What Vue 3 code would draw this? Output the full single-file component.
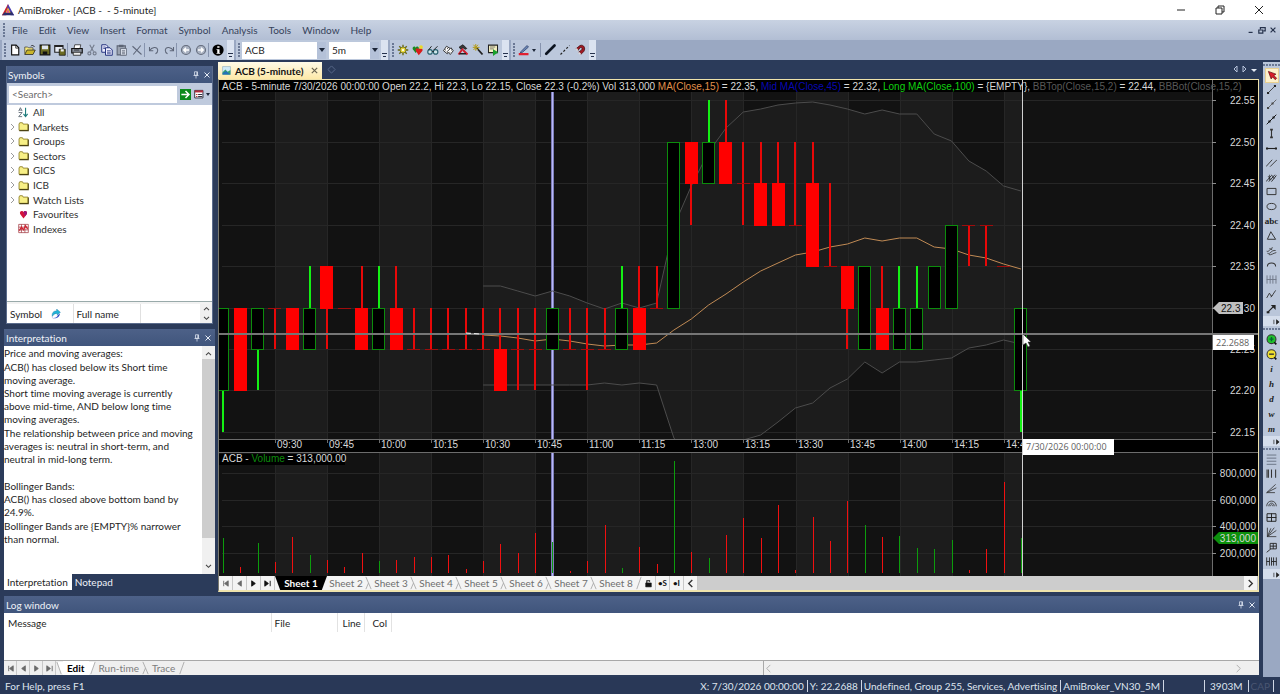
<script setup>
const icons = {
  logo: '<path d="M8 1 1 14h5l3-8z" fill="#c8202c"/><path d="M8 1l7 13h-4L7 6z" fill="#4a3fb0"/><path d="M1 14h14l-3-4H5z" fill="#2c2f6b"/><path d="M8 5l3 6H5z" fill="#f0b428"/><path d="M8 7l1.500 4H6z" fill="#d84a9a"/>',
  file: '<path d="M3.500 1.500h6l3.500 3.500v9.500h-9.500z" fill="#fff" stroke="#111" stroke-width="1.500"/><path d="M9 1.500v4h4" fill="none" stroke="#111"/>',
  open: '<path d="M1 13V4h4l1 1h6v3" fill="#f5e87a" stroke="#444" /><path d="M1 14l3-6h11l-3 6z" fill="#c9b52a" stroke="#222"/><path d="M9 3c2-2 4-1 5 1" fill="none" stroke="#111"/>',
  save: '<path d="M1.500 1.500h13v13h-13z" fill="#6b6b22" stroke="#111" stroke-width="1.500"/><path d="M4 2h8v5H4z" fill="#dfe6ee"/><path d="M5 10h6v4H5z" fill="#111"/>',
  saveall: '<path d="M1 2h11v9H1z" fill="#e8edf5" stroke="#222" stroke-width="1.500"/><path d="M1 2h11v2H1z" fill="#222"/><path d="M7 7h8v8H7z" fill="#6b6b22" stroke="#111"/><path d="M9 7h4v3H9z" fill="#eee"/>',
  print: '<path d="M4 6l1-5h8l-1 5" fill="#fff" stroke="#222"/><path d="M1 6h14v6H1z" fill="#8b919c" stroke="#111" stroke-width="1.500"/><path d="M3 11h10v4H3z" fill="#eee" stroke="#111"/><path d="M4 8h7" stroke="#111"/>',
  cut: '<path d="M5 1l5 9M11 1L6 10" stroke="#747c8c" stroke-width="1.500"/><circle cx="4.500" cy="12.500" r="2" fill="none" stroke="#747c8c" stroke-width="1.500"/><circle cx="11.500" cy="12.500" r="2" fill="none" stroke="#747c8c" stroke-width="1.500"/>',
  copy: '<path d="M1 1h6l2 2v8H1z" fill="#eef" stroke="#22307c" stroke-width="1.300"/><path d="M6 5h6l3 3v7H6z" fill="#eef" stroke="#22307c" stroke-width="1.300"/><path d="M3 4h3M3 6h3M8 9h5M8 11h5M8 13h5" stroke="#22307c"/>',
  paste: '<path d="M1.500 2.500h11v12h-11z" fill="#9aa2b0" stroke="#5c6474" stroke-width="1.400"/><path d="M4 1h6v3H4z" fill="#5c6474"/><path d="M6 6h8v9H6z" fill="#d5dbe6" stroke="#5c6474"/><path d="M8 9h4M8 11h4M8 13h4" stroke="#5c6474"/>',
  del: '<path d="M2 3l12 11M13 2L3 14" stroke="#5e6678" stroke-width="1.400"/>',
  undo: '<path d="M2 4v5h5" fill="none" stroke="#5e6678" stroke-width="1.400"/><path d="M2 9c3-5 10-6 11-1 0 2-1 4-3 5" fill="none" stroke="#5e6678" stroke-width="1.400"/>',
  redo: '<path d="M14 4v5H9" fill="none" stroke="#5e6678" stroke-width="1.400"/><path d="M14 9C11 4 4 3 3 8c0 2 1 4 3 5" fill="none" stroke="#5e6678" stroke-width="1.400"/>',
  back: '<circle cx="8" cy="8" r="6" fill="#a9b2c2" stroke="#656d7d" stroke-width="1.500"/><path d="M12 8H5M8 5L5 8l3 3" fill="none" stroke="#fff" stroke-width="1.800"/>',
  fwd: '<circle cx="8" cy="8" r="6" fill="#a9b2c2" stroke="#656d7d" stroke-width="1.500"/><path d="M4 8h7M8 5l3 3-3 3" fill="none" stroke="#fff" stroke-width="1.800"/>',
  info: '<circle cx="8" cy="8" r="7.500" fill="#000"/><path d="M7 3h3v2H7zM6 7h4v5h1v1H6v-1h1V8H6z" fill="#fff"/>',
  gear: '<path d="M8 1v14M1 8h14M3 3l10 10M13 3L3 13" stroke="#6a6a18" stroke-width="1.800"/><circle cx="8" cy="8" r="4" fill="#e6d63a" stroke="#6a6a18"/><circle cx="8" cy="8" r="1.500" fill="#fff"/>',
  hearts: '<path d="M5 12L1 7c-1-4 3-5 4-2 1-3 5-2 4 2z" fill="#188a20"/><path d="M9 15L5 9c-1-4 3-4 4-2 1-2 6-2 5 2z" fill="#d81c1c"/><circle cx="12" cy="4" r="2.500" fill="#e9d92c"/>',
  glasses: '<circle cx="4" cy="10.500" r="3" fill="#cfe6ea" stroke="#28606e" stroke-width="1.500"/><circle cx="11.500" cy="10.500" r="3" fill="#cfe6ea" stroke="#28606e" stroke-width="1.500"/><path d="M2 8l4-5M9 8l5-5M7 10h2" stroke="#222" stroke-width="1.300"/>',
  dice: '<path d="M2 9l4-6 5 3-4 7z" fill="#fff" stroke="#222" stroke-width="1.200"/><path d="M7 10l5-5 3 4-4 5z" fill="#fff" stroke="#222" stroke-width="1.200"/><path d="M4 8h1M7 6h1M10 11h1M12 8h1" stroke="#222" stroke-width="1.500"/>',
  hammer: '<path d="M3 4l5-3 5 5-2 1-3-2-3 2z" fill="#3a3a3a" stroke="#111"/><path d="M8 6L2 14" stroke="#d01c2c" stroke-width="2.500"/><path d="M8 8l6 6" stroke="#d01c2c" stroke-width="2.500"/><path d="M3 13h9" stroke="#222" stroke-width="2"/>',
  wand: '<path d="M6 5l8 9" stroke="#222" stroke-width="2.500"/><path d="M5 0v9M1 4.500h9M2 1l6 7M8 1L2 8" stroke="#b59c1a" stroke-width="1.300"/>',
  exec: '<path d="M2 1.500h12v10H2z" fill="#f5f0c0" stroke="#222" stroke-width="1.400"/><path d="M4 4h7M4 6.500h5" stroke="#555"/><path d="M8 7l7 4-7 5z" fill="#1aa02c"/>',
  pen: '<path d="M4 10L12 2l2 2-8 7-3 1z" fill="#6c87b8" stroke="#2c3f66"/><path d="M1 13.500h13" stroke="#e02030" stroke-width="3"/>',
  thick: '<path d="M3 13L14 2" stroke="#0c1420" stroke-width="3.500" stroke-linecap="round"/>',
  dashed: '<path d="M2 14L14 2" stroke="#222" stroke-width="1.600" stroke-dasharray="3 2.500"/>',
  magnet: '<path d="M3 6L8 2c5-2 8 4 5 8l-4 4-3-3 4-3c2-2 0-4-2-3L5 9z" fill="#a01822" stroke="#40080c"/><path d="M3 6l2 3M6 11l3 3" stroke="#ddd" stroke-width="2"/>',
  // drawing tools
  pointer: '<path d="M2 2l4 11 2-3 4 4 2-2-4-4 3-2z" fill="#d81c2c" stroke="#5c0c12"/>',
  seg: '<path d="M3 13L13 3" stroke="#333" stroke-width="1.200"/><path d="M1.500 11.500h3v3h-3zM11.500 1.500h3v3h-3z" fill="#222"/>',
  ray: '<path d="M3 13L15 1" stroke="#555" stroke-width="1.200"/><path d="M1.500 11.500h3v3h-3zM8 5h3v3H8z" fill="#444"/>',
  line: '<path d="M1 15L15 1" stroke="#111" stroke-width="1.400"/><path d="M3.500 9.500h3v3h-3zM9.500 3.500h3v3h-3z" fill="#111"/>',
  vert: '<path d="M8 2v12" stroke="#333" stroke-width="1.600"/><path d="M6 1h4v2.500H6zM6 12.500h4V15H6z" fill="#333"/>',
  horiz: '<path d="M1 8h14" stroke="#222" stroke-width="1.600"/><path d="M0 6.500h3v3H0zM13 6.500h3v3h-3z" fill="#222"/>',
  para: '<path d="M0 14L9 4M6 14L16 4" stroke="#333" stroke-width="1.300"/>',
  pitch: '<path d="M0 14L8 5M4 14l9-10M8 14l7-9" stroke="#222" stroke-width="1.300"/><path d="M3 6l4 5M8 4l4 6M5 4v8" stroke="#222"/>',
  rect: '<path d="M1.500 3.500h13v9h-13z" fill="none" stroke="#333" stroke-width="1.400"/>',
  oval: '<ellipse cx="8" cy="8" rx="6.500" ry="4.500" fill="none" stroke="#333" stroke-width="1.400"/>',
  tri: '<path d="M7 2.500l7 11H2z" fill="none" stroke="#333" stroke-width="1.400"/>',
  cycles: '<path d="M1 9c4 2 5-5 9-5M2 12c5 2 5-5 12-4M4 14c4 1 6-2 11-3M5 5l4 2" fill="none" stroke="#333" stroke-width="1.200"/>',
  arc: '<path d="M2 11c0-7 12-7 12 0" fill="none" stroke="#333" stroke-width="1.500"/>',
  vlines: '<path d="M1.500 2v12M6 2v12M10 2v12M14.500 2v12M1 8h14" stroke="#6c7484" stroke-width="1.300"/>',
  zig: '<path d="M1 13L5 6l3 5 6-9M7 12l2-3" fill="none" stroke="#333" stroke-width="1.300"/>',
  arrow: '<path d="M3 13L12 4" stroke="#222" stroke-width="1.600"/><path d="M7 3h7v7z" fill="#222"/><path d="M1 12h4v3H1z" fill="#222"/>',
  zin: '<circle cx="8" cy="7.500" r="6.500" fill="#20c02c" stroke="#333" stroke-width="1.500"/><path d="M5 7.500h6M8 4.500v6" stroke="#063" stroke-width="2"/><path d="M12 12l3 3" stroke="#111" stroke-width="2.500"/>',
  zout: '<circle cx="8" cy="7.500" r="6.500" fill="#f0e030" stroke="#333" stroke-width="1.500"/><path d="M4.500 7.500h7" stroke="#333" stroke-width="2"/><path d="M12 12l3 3" stroke="#111" stroke-width="2.500"/>',
  hlines: '<path d="M1 1.500h14M1 6h14M1 10.500h14M1 15h14" stroke="#4c5464"/>',
  vbars: '<path d="M1.500 2v12M3.500 2v12M8 2v12M14 2v12" stroke="#333" stroke-width="1.500"/>',
  fan: '<path d="M1 14L14 2M1 14L15 7M1 14h12" stroke="#333" stroke-width="1.200"/>',
  arcs: '<path d="M1 12c0-10 14-10 14 0M4 12c0-6 8-6 8 0M6 12c0-3 4-3 4 0" fill="none" stroke="#333" stroke-width="1.200"/>',
  grid: '<path d="M1.500 2.500h13v11h-13zM8 2v12M1 8h14" fill="none" stroke="#222" stroke-width="1.400"/>',
  gann: '<path d="M2 1v13h13M2 14L12 1M2 14L15 5M2 14L7 2" fill="none" stroke="#333" stroke-width="1.200"/>',
  ext: '<path d="M1 15l6-5M6 2h9v8H6zM6 6h9M10.500 2v8" fill="none" stroke="#222" stroke-width="1.300"/>',
  time: '<path d="M1 2v12M5 2v12M1 8h4M8 2v12M11 2v12M15 2v12M8 8h7" stroke="#222" stroke-width="1.300"/>',
  // tree and panels
  sort: '<path d="M1 6l2.500-5L6 6M2 4.500h3M1 8h5l-5 6h5" fill="none" stroke="#53606c" stroke-width="1.200"/><path d="M11 1v12M8 10l3 4 3-4" fill="none" stroke="#1e7c7c" stroke-width="1.600"/>',
  folder: '<path d="M1.500 4.500l1-2h4l1 2h7v9h-13z" fill="#f7ef86" stroke="#8b7b22" stroke-width="1.200"/><path d="M2 14h13V5" fill="none" stroke="#4c4312" stroke-width="1.500"/>',
  heart: '<path d="M8 15L2 7C0 1 7 0 8 4c1-4 8-3 6 3z" fill="#d3143c"/><path d="M8 4c1-4 8-3 6 3l-3 4z" fill="#9c1478"/>',
  indexes: '<path d="M1 2h14v12H1zM1 6h14M1 10h14M5 2v12M10 2v12" fill="#fff" stroke="#9c2c34"/><path d="M2 11l3-5 3 4 3-6 3 5" fill="none" stroke="#d02030" stroke-width="1.800"/>',
  go: '<path d="M0 0h16v16H0z" fill="#0c8a1c"/><path d="M2 8h10M8 3l5 5-5 5" fill="none" stroke="#fff" stroke-width="2.200"/>',
  list: '<path d="M1 2h12v11H1z" fill="#fff" stroke="#334" stroke-width="1.400"/><path d="M1 2h12v3H1z" fill="#b02c3c"/><path d="M3 8h2M3 11h2" stroke="#c02c2c" stroke-width="1.500"/><path d="M6 8h6M6 11h6" stroke="#334" stroke-width="1.500"/>',
  refresh: '<path d="M9 0l6 5-5 5V7C7 7 4 8 2 12 1 6 4 3 9 3z" fill="#20b4d8" stroke="#186c9c" stroke-width=".6"/><path d="M1 14c6 1 9-1 10-4l3-3c1 5-5 10-13 7z" fill="#3048c8"/>',
  picture: '<path d="M1 1h14v14H1z" fill="#cfeaf8" stroke="#8ab"/><path d="M1 11l5-5 4 4 5-3v8H1z" fill="#36a06c"/><path d="M1 13l6-4 8 6H1z" fill="#2470b8"/>',
  pin: '<path d="M5 1.500h6v7H5zM3 9h10M8 9v6" fill="none" stroke="#dde4f0" stroke-width="1.500"/><path d="M9 2h2v6H9z" fill="#dde4f0"/>',
  close: '<path d="M3 3l10 10M13 3L3 13" fill="none" stroke="#e4eaf4" stroke-width="2"/>',
  lock: '<path d="M3 7h10v7H3z" fill="#111"/><path d="M5 7V3h5v2" fill="none" stroke="#111" stroke-width="1.800"/>'
}
const menus = ['File', 'Edit', 'View', 'Insert', 'Format', 'Symbol', 'Analysis', 'Tools', 'Window', 'Help']
const mainTools = ['file', 'open', 'save', 'saveall', '|', 'print', 'cut', 'copy', 'paste', 'del', '|', 'undo', 'redo', '|', 'back', 'fwd', '|', 'info']
const analysisTools = ['gear', 'hearts', 'glasses', 'dice', 'hammer', 'wand', 'exec']
const tree = [['All', 'sort', false], ['Markets', 'folder', true], ['Groups', 'folder', true], ['Sectors', 'folder', true], ['GICS', 'folder', true], ['ICB', 'folder', true], ['Watch Lists', 'folder', true], ['Favourites', 'heart', false], ['Indexes', 'indexes', false]]
const notes = ['Price and moving averages:', 'ACB() has closed below its Short time\nmoving average.', 'Short time moving average is currently\nabove mid-time, AND below long time\nmoving averages.', 'The relationship between price and moving\naverages is: neutral in short-term, and\nneutral in mid-long term.', '\u00a0', 'Bollinger Bands:', 'ACB() has closed above bottom band by\n24.9%.', 'Bollinger Bands are {EMPTY}% narrower\nthan normal.']
const sheets = [2, 3, 4, 5, 6, 7, 8]
const rail = [
  { cls: 'draw', items: ['pointer', 'seg', 'ray', 'line', 'vert', 'horiz', 'para', 'pitch', 'rect', 'oval', 'abc', 'tri', 'cycles', 'arc', 'vlines', 'zig', 'arrow'] },
  { cls: 'zoom', items: ['zin', 'zout', 'i', 'h', 'd', 'w', 'm'] },
  { cls: 'fibo', items: ['hlines', 'vbars', 'fan', 'arcs', 'grid', 'gann', 'ext', 'time'] }
]

// Price levels: 0 is 22.55 and each step is 0.05 lower.
const bx = i => 222.8 + 17.35 * i
const ly = n => Math.round(100.3 + 41.45 * n)
// Colour, then levels of body top, body bottom, one wick end and the other.
const bars = [
  'g5758', 'r5757', 'g5657', 'r5556', 'r5656', 'g5646', 'r4546', 'r5555', 'r5646', 'g5646', 'r5646', 'r6656', 'r6656', 'r6656', 'r6656', 'r6656',
  'r6757', 'r6657', 'r6657', 'g5656', 'r6656', 'r6657', 'r6656', 'g5646', 'r5646', 'r5545', 'g1515', 'r1213', 'g1202', 'r1202', 'r2213', 'r2313',
  'r2313', 'r3313', 'r2414', 'r4424', 'r4546', 'g4646', 'r5646', 'g5646', 'g5646', 'g4545', 'g3535', 'r3334', 'r3334', 'r4444', 'g5758'
]
const candles = bars.map((s, i) => {
  const [t, b, h, l] = s.slice(1).split('').map(Number)
  const x = Math.round(bx(i) - 6.5)
  return { i, up: s[0] === 'g', flat: t === b, x, wx: Math.round(bx(i) - 1), top: ly(t), bottom: ly(b), high: ly(h), low: ly(l) }
})
const volTop = [538, 567, 543, 562, 537, 555, 560, 567, 553, 561, 560, 557, 557, 555, 569, 561, 544, 553, 533, 542, 571, 561, 525, 568, 547, 564, 461, 552, 558, 535, 518, 538, 505, 570, 517, 541, 501, 525, 537, 536, 548, 549, 540, 570, 549, 482, 538]
const pts = (from, ys) => ys.map((y, k) => `${bx(from + k).toFixed(1)},${y}`).join(' ')
const topYs = [286, 286, 291, 296, 291, 296, 303, 309, 303, 308, 303, 226, 186, 152, 128, 112, 109, 105, 103, 102, 105, 109, 114, 110, 114, 114, 134, 141, 161, 171, 186, 191]
const botYs = [385, 385, 385, 385, 385, 385, 385, 383, 385, 383, 385, 438, 460, 470, 460, 440, 435, 422, 408, 403, 388, 379, 362, 373, 362, 362, 360, 358, 348, 345, 340, 344]
const bbTop = pts(15, topYs)
const bbBot = pts(15, botYs)
const bbArea = bbTop + ' ' + botYs.map((y, k) => `${bx(15 + k).toFixed(1)},${y}`).reverse().join(' ')
const ma = pts(15, [335, 336, 338, 341, 339, 341, 344, 346, 345, 345, 343, 330, 319, 305, 294, 282, 271, 263, 255, 252, 247, 244, 238, 241, 238, 238, 247, 249, 255, 258, 264, 269])
const times = ['09:30', '09:45', '10:00', '10:15', '10:30', '10:45', '11:00', '11:15', '13:00', '13:15', '13:30', '13:45', '14:00', '14:15', '14:45'].map((t, k) => ({ t, x: Math.round(275 + 52.05 * k), light: k % 2 === 0 }))
const prices = ['22.55', '22.50', '22.45', '22.40', '22.35', '22.30', '22.25', '22.20', '22.15']
const vols = [['800,000', 473], ['600,000', 500], ['400,000', 526], ['200,000', 553]]
</script>

<template>
  <div class="app">
    <header class="title">
      <svg class="ic14" viewBox="0 0 16 16" v-html="icons.logo"></svg>
      <h1>AmiBroker - [ACB -&nbsp; - 5-minute]</h1>
      <div class="win">
        <button aria-label="Minimize"><svg viewBox="0 0 10 10"><path d="M1 5h8" /></svg></button>
        <button aria-label="Restore"><svg viewBox="0 0 10 10"><path d="M1 3h6v6H1zM3 3V1h6v6H7" /></svg></button>
        <button aria-label="Close"><svg viewBox="0 0 10 10"><path d="M1 1l8 8M9 1L1 9" /></svg></button>
      </div>
    </header>

    <nav class="menu">
      <span class="grip"></span>
      <button v-for="m in menus" :key="m">{{ m }}</button>
      <div class="mdi">
        <button aria-label="Minimize document"><svg viewBox="0 0 10 10"><path d="M2 8h5" /></svg></button>
        <button aria-label="Restore document"><svg viewBox="0 0 10 10"><path d="M1 5h5v4H1zM3 4V2h6v4H7" /></svg></button>
        <button aria-label="Close document"><svg viewBox="0 0 10 10"><path d="M2 2l6 6M8 2L2 8" /></svg></button>
      </div>
    </nav>

    <div class="toolbars">
      <div class="bar">
        <span class="grip"></span>
        <template v-for="(t, k) in mainTools" :key="k">
          <span v-if="t === '|'" class="sep"></span>
          <button v-else class="tb" :aria-label="t"><svg viewBox="0 0 16 16" v-html="icons[t]"></svg></button>
        </template>
        <span class="more"></span>
      </div>
      <div class="bar">
        <span class="grip"></span>
        <label class="combo wide"><select aria-label="Symbol"><option>ACB</option></select><i></i></label>
        <label class="combo"><select aria-label="Interval"><option>5m</option></select><i></i></label>
        <span class="more"></span>
      </div>
      <div class="bar">
        <span class="grip"></span>
        <button v-for="t in analysisTools" :key="t" class="tb" :aria-label="t"><svg viewBox="0 0 16 16" v-html="icons[t]"></svg></button>
        <span class="more"></span>
      </div>
      <div class="bar">
        <span class="grip"></span>
        <button class="tb" aria-label="Line colour"><svg viewBox="0 0 16 16" v-html="icons.pen"></svg></button>
        <span class="drop"></span>
        <span class="sep lone"></span>
        <button v-for="t in ['thick', 'dashed', 'magnet']" :key="t" class="tb" :aria-label="t"><svg viewBox="0 0 16 16" v-html="icons[t]"></svg></button>
        <span class="more"></span>
      </div>
    </div>

    <div class="body">
      <div class="work">
        <div class="upper">
          <aside class="side">
            <section class="panel symbols">
              <h2 class="cap">Symbols
                <button aria-label="Pin"><svg viewBox="0 0 16 16" v-html="icons.pin"></svg></button>
                <button aria-label="Close"><svg viewBox="0 0 16 16" v-html="icons.close"></svg></button>
              </h2>
              <div class="search">
                <input type="text" placeholder="<Search>" aria-label="Search symbols" />
                <button aria-label="Go"><svg viewBox="0 0 16 16" v-html="icons.go"></svg></button>
                <button class="lst" aria-label="View options"><svg viewBox="0 0 16 16" v-html="icons.list"></svg><span class="drop"></span></button>
              </div>
              <ul class="tree">
                <li v-for="[name, ic, kids] in tree" :key="name">
                  <svg class="tw" viewBox="0 0 6 8"><path v-if="kids" d="M1 1l3 3-3 3" /></svg>
                  <svg class="ti" :class="ic" viewBox="0 0 16 16" v-html="icons[ic]"></svg>{{ name }}
                </li>
              </ul>
              <div class="symhead">
                <table><thead><tr>
                  <th class="c1">Symbol <svg viewBox="0 0 16 16" v-html="icons.refresh"></svg></th><th class="c2">Full name</th>
                </tr></thead></table>
                <div class="spin">
                  <button aria-label="Up"><svg viewBox="0 0 8 6"><path d="M1 5l3-3 3 3" /></svg></button>
                  <button aria-label="Down"><svg viewBox="0 0 8 6"><path d="M1 1l3 3 3-3" /></svg></button>
                </div>
              </div>
            </section>

            <section class="panel interp">
              <h2 class="cap">Interpretation
                <button aria-label="Pin"><svg viewBox="0 0 16 16" v-html="icons.pin"></svg></button>
                <button aria-label="Close"><svg viewBox="0 0 16 16" v-html="icons.close"></svg></button>
              </h2>
              <div class="notes">
                <div class="text"><p v-for="(n, k) in notes" :key="k">{{ n }}</p></div>
                <div class="scroll">
                  <svg viewBox="0 0 8 6"><path d="M1 5l3-3 3 3" /></svg>
                  <span class="thumb"></span>
                  <svg viewBox="0 0 8 6"><path d="M1 1l3 3 3-3" /></svg>
                </div>
              </div>
              <div class="ptabs"><button class="on">Interpretation</button><button>Notepad</button></div>
            </section>
          </aside>

          <main class="doc">
            <div class="doctabs">
              <button class="doctab"><svg viewBox="0 0 16 16" v-html="icons.picture"></svg>ACB (5-minute)<svg class="x" viewBox="0 0 10 10"><path d="M2 2l6 6M8 2L2 8" /></svg></button>
              <svg class="dia" viewBox="0 0 10 10"><path d="M5 1l4 4-4 4-4-4z" /></svg>
              <svg class="arrows" viewBox="0 0 28 10"><path d="M6 2v6L3 5zM12 2v6l3-3z" fill="none" stroke="#b8c4dc" /><path d="M20 5h6l-3 3z" fill="#e4eaf4" /></svg>
            </div>
            <div class="chartwin">
              <svg class="chart" viewBox="219 80 1039 496" role="img" aria-label="ACB 5-minute price and volume chart">
                <defs><clipPath id="price"><rect x="219" y="92" width="993" height="347" /></clipPath></defs>
                <rect x="219" y="80" width="1040" height="496" fill="#000" />
                <g shape-rendering="crispEdges">
                  <rect x="219" y="80" width="993" height="359" fill="#121212" />
                  <rect x="219" y="453" width="993" height="123" fill="#121212" />
                  <template v-for="c in times" :key="c.t">
                    <g v-if="c.light" fill="#1c1c1c">
                      <rect :x="c.x" y="80" :width="c.x > 1000 ? 19 : 52" height="359" />
                      <rect :x="c.x" y="453" :width="c.x > 1000 ? 19 : 52" height="123" />
                    </g>
                  </template>
                </g>
                <g clip-path="url(#price)">
                  <polygon :points="bbArea" fill="#1c1c1c" />
                </g>
                <g shape-rendering="crispEdges" stroke="#262626">
                  <path v-for="c in times" :key="c.t" :d="`M${c.x + .5} 92V439M${c.x + .5} 453V576`" />
                  <path v-for="(p, n) in prices" :key="p" :d="`M222 ${ly(n) + .5}H1212`" />
                  <path v-for="v in vols" :key="v[0]" :d="`M222 ${v[1] + .5}H1212`" />
                </g>
                <rect x="551" y="92" width="3" height="347" fill="#7c7cb8" /><rect x="552" y="92" width="1" height="347" fill="#b8b8f8" />
                <rect x="551" y="453" width="3" height="123" fill="#7c7cb8" /><rect x="552" y="453" width="1" height="123" fill="#b8b8f8" />
                <g clip-path="url(#price)" fill="none">
                  <polyline :points="bbTop" stroke="#4c4c4c" />
                  <polyline :points="bbBot" stroke="#4c4c4c" />
                  <polyline :points="ma" stroke="#c08a54" />
                </g>
                <g shape-rendering="crispEdges">
                  <g v-for="c in candles" :key="c.i">
                    <rect v-if="c.low > c.high" :x="c.wx" :y="c.high" width="2" :height="c.low - c.high" :fill="c.up ? '#14f014' : '#e80808'" />
                    <rect v-if="c.flat" :x="c.x" :y="c.top" width="13" height="1" fill="#a00c0c" />
                    <rect v-else-if="c.up" :x="c.x + .5" :y="c.top + .5" width="12" :height="c.bottom - c.top" fill="#000" stroke="#0c8c0c" />
                    <rect v-else :x="c.x" :y="c.top" width="13" :height="c.bottom - c.top + 1" fill="#f00" />
                    <rect :x="c.wx + 1" :y="volTop[c.i]" width="1" :height="573 - volTop[c.i]" :fill="c.up ? '#0c9c0c' : '#f01010'" />
                  </g>
                  <path d="M219 439.500H1212M219 452.500H1258M1212.500 80V576" stroke="#6c6c6c" />
                  <path v-for="c in times" :key="c.t" :d="`M${c.x + .5} 440v3`" stroke="#6c6c6c" />
                  <path v-for="(p, n) in prices" :key="p" :d="`M1212 ${ly(n) + .5}h4`" stroke="#8c8c8c" />
                  <path v-for="v in vols" :key="v[0]" :d="`M1212 ${v[1] + .5}h4`" stroke="#8c8c8c" />
                  <rect x="219" y="80" width="993" height="12" fill="#000" />
                  <rect x="219" y="454" width="126" height="11" fill="#000" />
                </g>
                <text class="lab" x="222" y="90">ACB - 5-minute 7/30/2026 00:00:00 Open 22.2, Hi 22.3, Lo 22.15, Close 22.3 (-0.2%) Vol 313,000 <tspan fill="#e0904c">MA(Close,15)</tspan> = 22.35, <tspan fill="#0808b4">Mid MA(Close,45)</tspan> = 22.32, <tspan fill="#10d010">Long MA(Close,100)</tspan> = {EMPTY}, <tspan fill="#585858">BBTop(Close,15,2)</tspan> = 22.44, <tspan fill="#585858">BBBot(Close,15,2)</tspan></text>
                <text class="lab" x="222" y="462">ACB - <tspan fill="#0c8c0c">Volume</tspan> = 313,000.00</text>
                <text v-for="c in times" :key="c.t" class="lab" :x="c.x + 2" y="448">{{ c.t }}</text>
                <g text-anchor="end">
                  <text v-for="(p, n) in prices" :key="p" class="lab" x="1255" :y="ly(n) + 4">{{ p }}</text>
                  <text v-for="v in vols" :key="v[0]" class="lab" x="1256" :y="v[1] + 4">{{ v[0] }}</text>
                </g>
                <path d="M1213 308l6-6h24v12h-24z" fill="#c0c0c0" />
                <text class="lab ink" x="1221" y="312">22.3</text>
                <path d="M1213 538l6-6h39v12h-39z" fill="#0c900c" />
                <text class="lab" x="1256" y="542" text-anchor="end">313,000</text>
                <rect x="219" y="333" width="1039" height="2" fill="#767676" />
                <path d="M466 333l14 1" stroke="#f4f4f4" stroke-dasharray="5 3" />
                <rect x="1022" y="80" width="1" height="496" fill="#d0d0d0" />
                <rect x="1213" y="335" width="41" height="15" fill="#fff" />
                <text class="tip" x="1216" y="346">22.2688</text>
                <rect x="1023" y="439" width="91" height="16" fill="#fff" />
                <text class="tip" x="1026" y="450">7/30/2026 00:00:00</text>
                <path d="M1023 334v11l3-2 2 4 2-1-2-4h3z" fill="#fff" stroke="#222" stroke-width=".5" />
              </svg>
              <div class="sheets">
                <button v-for="(d, k) in ['M3 2v6M8 2v6L4 5z', 'M7 2v6L3 5z', 'M3 2v6l4-3z', 'M2 2v6l4-3zM8 2v6']" :key="k" class="nav" :class="{ dark: k > 1 }" :aria-label="['First sheet', 'Previous sheet', 'Next sheet', 'Last sheet'][k]"><svg viewBox="0 0 10 10"><path :d="d" /></svg></button>
                <button class="sheet on">Sheet 1</button>
                <template v-for="s in sheets" :key="s">
                  <button class="sheet">Sheet {{ s }}</button>
                  <svg class="slant" viewBox="0 0 8 14"><path v-if="s < 8" d="M1 0l6 14M4 7l-3 7" /><path v-else d="M7 0L2 14" /></svg>
                </template>
                <button class="nav dark" aria-label="Lock"><svg viewBox="0 0 16 16" v-html="icons.lock"></svg></button>
                <button class="nav dark mini" aria-label="Symbol link">•S</button>
                <button class="nav dark mini" aria-label="Interval link">•I</button>
                <button class="nav arrow" aria-label="Scroll left"><svg viewBox="0 0 10 10"><path d="M7 1L3 5l4 4" /></svg></button>
                <span class="track"></span>
                <button class="nav arrow" aria-label="Scroll right"><svg viewBox="0 0 10 10"><path d="M3 1l4 4-4 4" /></svg></button>
              </div>
            </div>
          </main>
        </div>

        <section class="log">
          <h2 class="cap">Log window
            <button aria-label="Pin"><svg viewBox="0 0 16 16" v-html="icons.pin"></svg></button>
            <button aria-label="Close"><svg viewBox="0 0 16 16" v-html="icons.close"></svg></button>
          </h2>
          <div class="logbody">
            <table><thead><tr><th class="m">Message</th><th class="f">File</th><th class="l">Line</th><th class="c">Col</th></tr></thead></table>
          </div>
          <div class="logtabs">
            <button v-for="(d, k) in ['M3 2v6M8 2v6L4 5z', 'M7 2v6L3 5z', 'M3 2v6l4-3z', 'M2 2v6l4-3zM8 2v6']" :key="k" class="nav" :aria-label="['First', 'Previous', 'Next', 'Last'][k]"><svg viewBox="0 0 10 10"><path :d="d" /></svg></button>
            <svg class="slant" viewBox="0 0 8 14"><path d="M1 0h7v14H6z" fill="#fff" stroke="none" /><path d="M1 0l5 14" /></svg>
            <button class="on">Edit</button>
            <svg class="slant" viewBox="0 0 8 14"><path d="M0 0h7L2 14H0z" fill="#fff" stroke="none" /><path d="M7 0L2 14" /></svg>
            <button class="lt">Run-time</button>
            <svg class="slant" viewBox="0 0 8 14"><path d="M1 0l6 14M4 7l-3 7" /></svg>
            <button class="lt">Trace</button>
            <svg class="slant" viewBox="0 0 8 14"><path d="M7 0L2 14" /></svg>
            <div class="hs">
              <svg viewBox="0 0 10 10"><path d="M7 1L3 5l4 4" /></svg>
              <svg viewBox="0 0 10 10"><path d="M3 1l4 4-4 4" /></svg>
            </div>
          </div>
        </section>
      </div>

      <aside class="rail">
        <div v-for="g in rail" :key="g.cls" class="rg">
          <span class="rgrip"></span>
          <div class="tools" :class="g.cls">
            <button v-for="t in g.items" :key="t" :class="{ on: t === 'pointer' }" :aria-label="t">
              <svg v-if="icons[t]" viewBox="0 0 16 16" v-html="icons[t]"></svg>
              <b v-else :class="{ abc: t === 'abc' }">{{ t }}</b>
            </button>
          </div>
          <span class="rmore"><svg viewBox="0 0 8 8"><path d="M1 2v5" /><path d="M4 2v5l3-2.500z" /></svg></span>
        </div>
      </aside>
    </div>

    <footer class="status">
      <span class="help">For Help, press F1</span>
      <span>X: 7/30/2026 00:00:00</span><span>Y: 22.2688</span><span>Undefined, Group 255, Services, Advertising</span><span>AmiBroker_VN30_5M</span><span class="gap"></span><span class="mem">3903M</span><span class="caps">CAP</span>
    </footer>
  </div>
</template>

<style>
body { margin: 0; background: #2b3b5a; }
</style>

<style scoped>
.app { font: 10px/14px Lato, "Open Sans", sans-serif; font-variant-ligatures: none; color: #1e1e1e; min-height: 100vh; display: flex; flex-direction: column; background: #2b3b5a; overflow: hidden; }
* { box-sizing: border-box; }
button { font: inherit; font-variant-ligatures: none; color: inherit; background: none; border: 0; padding: 0; margin: 0; display: inline-flex; align-items: center; justify-content: center; white-space: nowrap; }
h1, h2, p, ul { margin: 0; padding: 0; font: inherit; font-variant-ligatures: none; list-style: none; }
svg { display: block; flex: none; }
table { border-collapse: collapse; table-layout: fixed; }
th { font-weight: 400; text-align: left; padding: 0; }

.title { height: 20px; background: #fff; display: flex; align-items: center; gap: 3px; padding-left: 1px; }
.ic14 { width: 14px; height: 14px; }
.win { margin-left: auto; display: flex; }
.win button { width: 39px; height: 20px; }
.win svg { width: 10px; height: 10px; fill: none; stroke: #222; }
.win button:last-child { margin-right: 2px; }

.menu { height: 20px; background: linear-gradient(#c8d2e2, #b2bed4); display: flex; align-items: center; padding-left: 3px; color: #36425a; }
.menu > button { margin-left: 11px; }
.grip { width: 3px; height: 14px; flex: none; background: radial-gradient(circle at 1px 1px, #6a7894 1px, transparent 1px) 0 0 / 3px 3px; }
.menu .grip { margin-right: -5px; }
.mdi { margin-left: auto; display: flex; gap: 3px; padding-right: 3px; }
.mdi svg { width: 8px; height: 8px; fill: none; stroke: #26324c; stroke-width: 1.500; }

.toolbars { height: 20px; background: #9aa8c2; display: flex; gap: 2px; padding-left: 2px; }
.bar { display: flex; align-items: center; background: #bcc8dc; padding-left: 2px; }
.tb { width: 15px; height: 18px; }
.tb svg { width: 12px; height: 12px; }
.sep { width: 1px; height: 14px; background: #8794ae; margin: 0 1px 0 0; }
.sep.lone { margin-left: 4px; }
.more { width: 7px; height: 20px; margin-left: 2px; background: linear-gradient(#26324c, #26324c) 1px 13px / 5px 1px no-repeat, linear-gradient(#26324c, #26324c) 2px 16px / 3px 1px no-repeat, #dbe3f0; }
.combo { display: flex; align-items: center; width: 50px; height: 17px; background: #fff; margin-left: 1px; }
.combo + .combo { margin-left: 3px; }
.combo.wide { width: 84px; }
.combo select { flex: 1; min-width: 0; appearance: none; border: 0; background: none; font: inherit; color: #1e1e1e; padding: 0 0 0 3px; }
.combo i { width: 9px; height: 17px; background: #b4c1d8; display: flex; align-items: center; justify-content: center; }
.combo i::after, .drop { content: ""; width: 0; height: 0; border: 3px solid transparent; border-top: 4px solid #1c2638; border-bottom: 0; }
.drop { border-width: 3px 2px 0; margin-left: 1px; }

.body { display: flex; flex: 1; }
.work { flex: 1; min-width: 0; padding-right: 4px; display: flex; flex-direction: column; }
.upper { display: flex; }
.side { width: 218px; flex: none; padding: 6px 3px 0 4px; display: flex; flex-direction: column; gap: 5px; }
.cap { height: 17px; background: linear-gradient(#4d6188, #40557c); color: #eef2f8; display: flex; align-items: center; padding: 0 2px; }
.cap button { width: 11px; height: 12px; }
.cap button:first-of-type { margin-left: auto; }
.cap svg { width: 8px; height: 8px; }
.symbols { margin: 0 2px; border: 1px solid #5b6c8c; border-top: 0; }
.symbols .cap { padding: 0 0 0 1px; }
.search { display: flex; align-items: center; background: #bfcadd; height: 22px; gap: 3px; padding: 1px 2px; }
.search input { flex: 1; min-width: 0; height: 17px; border: 0; font: inherit; padding: 0 3px; background: #fff; }
.search input::placeholder { color: #6a6a6a; opacity: 1; }
.search button svg { width: 11px; height: 11px; }
.lst { width: 16px; }
.tree { background: #fff; height: 197px; display: grid; grid-auto-rows: 1fr; padding-bottom: 65px; border-bottom: 1px solid #9aa; }
.tree li { display: flex; align-items: center; padding-left: 3px; color: #303030; }
.tw { width: 6px; height: 8px; fill: none; stroke: #9a9a9a; margin-right: 2px; }
.ti { width: 11px; height: 11px; margin-right: 4px; }
.ti.heart { width: 9px; height: 9px; margin: 0 5px 0 1px; }
.symhead { display: flex; background: #fff; border-top: 2px solid #f2f2f2; height: 21px; }
.symhead th { border-right: 1px solid #e0e0e0; }
.symhead th svg { display: inline-block; width: 10px; height: 10px; vertical-align: -1px; margin-left: 6px; }
.symhead .c1 { width: 66px; padding-left: 3px; }
.symhead .c2 { width: 67px; padding-left: 3px; }
.spin { margin-left: auto; width: 12px; background: #f0f0f0; display: flex; flex-direction: column; justify-content: space-around; align-items: center; }
.spin svg, .scroll svg { width: 7px; height: 5px; fill: none; stroke: #444; stroke-width: 1.300; }
.interp { flex: 1; display: flex; flex-direction: column; }
.notes { background: #fff; display: flex; height: 228px; }
.text { flex: 1; min-width: 0; padding-top: 1px; line-height: 13px; white-space: pre; }
.text p:nth-child(even) { padding-top: 1px; }
.scroll { width: 13px; background: #f0f0f0; display: flex; flex-direction: column; align-items: center; padding: 5px 0; }
.thumb { width: 13px; height: 179px; background: #cdcdcd; margin-top: 3px; }
.scroll svg:last-child { margin-top: auto; }
.ptabs { display: flex; color: #eef2f8; height: 16px; }
.ptabs button { padding: 0 4px 0 3px; }
.ptabs .on { background: #fff; color: #1e1e1e; }

.doc { flex: 1; min-width: 0; }
.doctabs { height: 19px; display: flex; align-items: flex-end; padding-top: 2px; }
.doctab { height: 17px; background: linear-gradient(#fffbe8, #fde9a8); font-weight: 700; color: #111; padding: 0 3px 0 4px; }
.doctab svg { width: 9px; height: 9px; margin-right: 4px; }
.doctab .x { margin: 0 0 0 7px; stroke: #6a6450; fill: none; stroke-width: 1.300; }
.dia { width: 9px; height: 9px; fill: none; stroke: #5c6c8c; margin: 0 0 5px 5px; }
.arrows { width: 28px; height: 10px; margin: 0 0 5px auto; }
.chartwin { border: 1px solid #efe3ac; border-left-color: #7a7a70; border-bottom-width: 2px; }
.chart { width: 100%; height: auto; }
.lab { font: 10px "Liberation Sans", Arial, sans-serif; fill: #d8d8d8; white-space: pre; }
.ink { fill: #111; }
.tip { font: 9px "Open Sans", sans-serif; fill: #606060; }
.sheets { display: flex; height: 14px; background: #f4f4f4; color: #6e6e6e; }
.nav { width: 14px; border-right: 1px solid #c8c8c8; background: #f4f4f4; }
.nav svg { width: 9px; height: 9px; fill: #6a6a6a; stroke: #6a6a6a; }
.nav.dark svg { fill: #111; stroke: #111; }
.mini { font-size: 8px; font-weight: 700; color: #111; }
.nav.arrow svg { fill: none; stroke: #333; stroke-width: 1.500; }
.sheet { width: 38px; }
.sheet.on { width: 52px; background: #000; color: #fff; font-weight: 700; clip-path: polygon(0 0, 100% 0, 90% 100%, 10% 100%); }
.slant { width: 7px; height: 14px; fill: none; stroke: #a8a8a8; }
.track { flex: 1; background: #cdcdcd; }

.log { margin: 4px 0 0 4px; }
.logbody { background: #fff; height: 47px; }
.logbody th { height: 19px; border-right: 1px solid #e2e2e2; }
.m { width: 267px; padding-left: 4px; }
.f { width: 66px; padding-left: 3px; }
.l { width: 27px; padding-left: 5px; }
.c { width: 27px; padding-left: 8px; }
.logtabs { display: flex; height: 15px; background: #efefef; border-top: 1px solid #a8a8a8; color: #7c7c7c; }
.logtabs .nav { background: #efefef; width: 13px; }
.logtabs .on { background: #fff; color: #000; font-weight: 700; padding: 0 4px; }
.lt { padding: 0 3px; }
.hs { margin-left: auto; width: 496px; display: flex; align-items: center; justify-content: space-between; padding-right: 16px; border-left: 1px solid #a8a8a8; }
.hs svg { width: 9px; height: 9px; fill: none; stroke: #a8a8a8; }

.rail { width: 17px; background: #9aa8c2; display: flex; flex-direction: column; border-top: 2px solid #2b3b5a; }
.rg { background: #bac6da; }
.rgrip { display: block; height: 6px; background: radial-gradient(circle at 1px 1px, #6a7894 1px, transparent 1px) 3px 2px / 3px 6px repeat-x; }
.tools { display: grid; grid-auto-rows: 1fr; }
.draw { height: 248px; }
.zoom { height: 104px; }
.fibo { height: 117px; }
.tools svg { width: 11px; height: 11px; }
.tools .on { background: #fdf0cc; outline: 1px solid #e8cf90; outline-offset: -1px; margin: 0 1px 0 2px; }
.tools b { font: italic 700 9px/12px "Liberation Serif", serif; color: #1c1c1c; }
.tools .abc { font-style: normal; }
.rmore { display: flex; justify-content: flex-end; align-items: center; height: 10px; background: #d4ddec; }
.rmore svg { width: 7px; height: 7px; fill: #222; stroke: #222; stroke-width: .8; }

.status { height: 17px; background: #293857; color: #dfe5ef; display: flex; align-items: center; padding: 0 6px 0 3px; }
.status span { padding: 0 3px 0 2px; border-right: 1px solid #cfd6e4; line-height: 12px; }
.status .help { margin-right: auto; border: 0; }
.status .gap { width: 41px; height: 12px; }
.status .mem { padding: 0 5px; }
.status .caps { color: #4a5672; }
</style>
